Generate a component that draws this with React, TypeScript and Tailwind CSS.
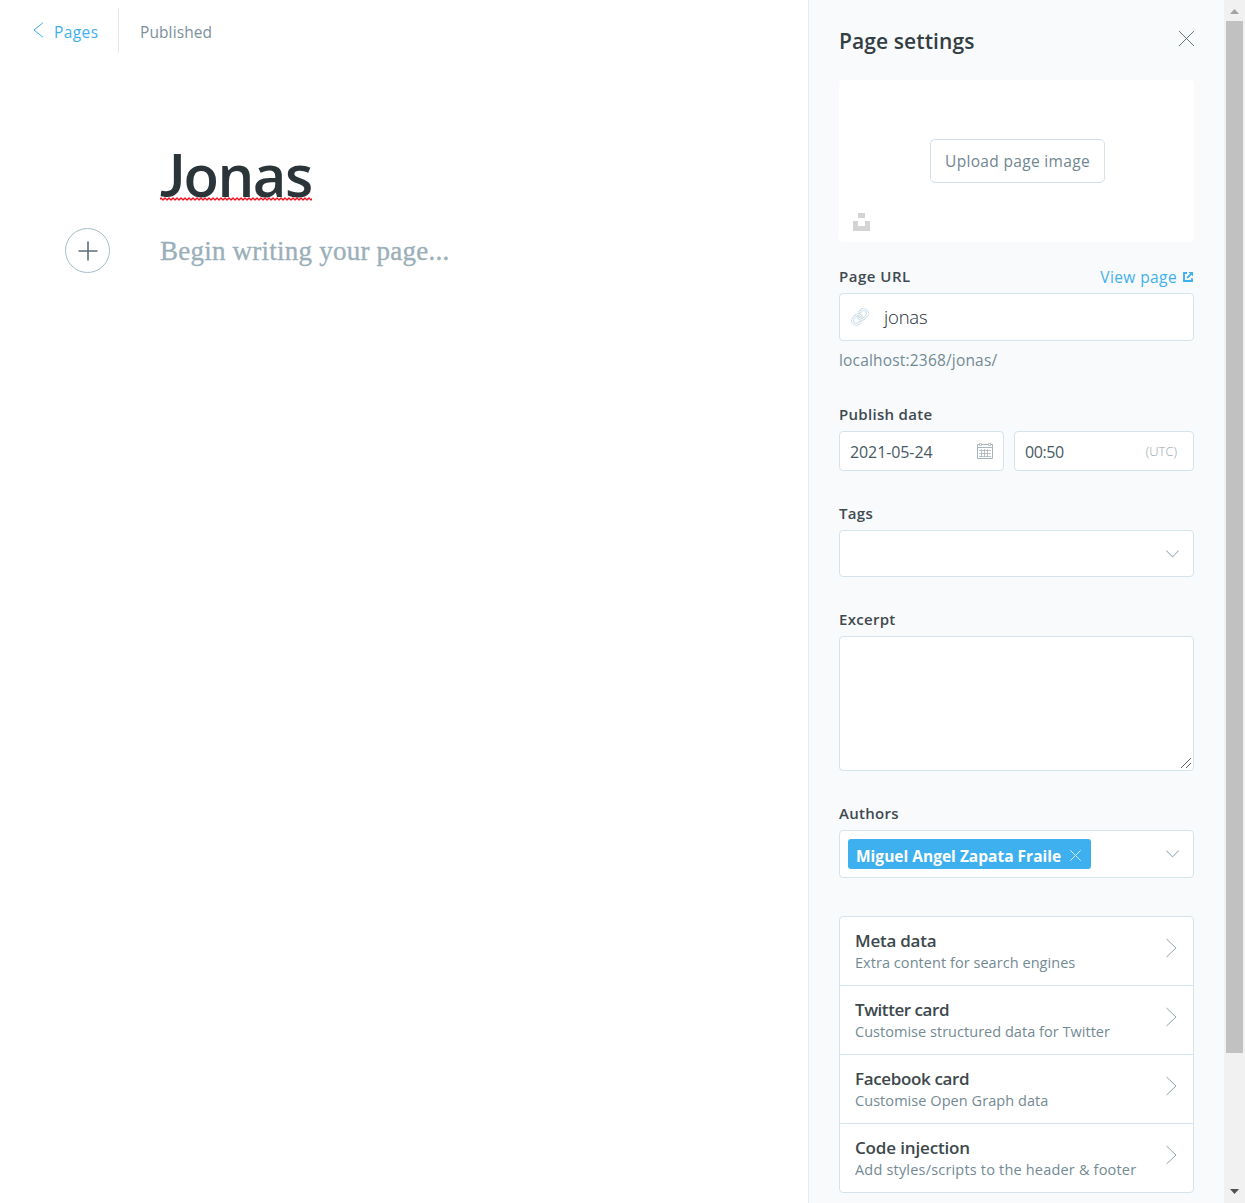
import React from "react";

const sans = "font-['Open_Sans','Noto_Sans',sans-serif]";

function Label({ children, className = "" }: { children: React.ReactNode; className?: string }) {
  return (
    <div className={`h-6 text-[15px] leading-[22px] font-semibold tracking-[0.3px] whitespace-nowrap text-[#3f4a50] ${className}`}>
      {children}
    </div>
  );
}

function ChevronDown() {
  return (
    <svg width="13" height="8" viewBox="0 0 13 8" fill="none" stroke="#a3b5bf" strokeWidth="1.1">
      <path d="M0.4 0.7 L6.5 6.8 L12.6 0.7" />
    </svg>
  );
}

const linkPaths = [
  "M10 13a5 5 0 0 0 7.54.54l3-3a5 5 0 0 0-7.07-7.07l-1.72 1.71",
  "M14 11a5 5 0 0 0-7.54-.54l-3 3a5 5 0 0 0 7.07 7.07l1.71-1.71",
];

const box = "rounded-[4px] border border-[#d5e3ec] bg-white";

const cards = [
  { title: "Meta data", text: "Extra content for search engines", t: "tracking-[-0.25px]", s: "tracking-[0.05px]" },
  { title: "Twitter card", text: "Customise structured data for Twitter", t: "tracking-[-0.45px]", s: "tracking-[0.03px]" },
  { title: "Facebook card", text: "Customise Open Graph data", t: "tracking-[-0.35px]", s: "tracking-[0.06px]" },
  { title: "Code injection", text: "Add styles/scripts to the header & footer", t: "tracking-[-0.15px]", s: "tracking-[0.19px]" },
];

function Editor() {
  return (
    <main className="flex-1 bg-white">
      <header className="flex h-[62px] items-start pt-2 pl-[33px]">
        <a className="flex h-[46px] items-center text-[15.5px] tracking-[0.4px] text-[#3eb0ef]">
          <svg className="-mt-[2px] mr-[10px]" width="11" height="16" viewBox="0 0 11 16" fill="none" stroke="#3eb0ef" strokeWidth="1">
            <path d="M10 0.7 L1 8 L10 15.3" />
          </svg>
          <span className="w-[64px] pt-[3px]">Pages</span>
        </a>
        <div className="h-[45px] w-px bg-[#dfe9ef]" />
        <span className="ml-[21px] text-[15.5px] leading-[48px] tracking-[0.1px] text-[#7c919b]">Published</span>
      </header>
      <h1 className="mt-[76px] ml-[160px] flex h-[76px] flex-col text-[60px] leading-[72px] font-semibold whitespace-nowrap text-[#2b3539]">
        <span className="h-[61px] tracking-[-1.5px]">
          <span className="font-['Lato',sans-serif] tracking-[-2px]">J</span>
          <span className="text-[58px]">onas</span>
        </span>
        <svg className="relative -mt-[2px]" width="152" height="4" fill="none">
          <defs>
            <pattern id="squiggle" width="4" height="4" patternUnits="userSpaceOnUse">
              <path d="M-1 3.5 L1 1 L3 3 L5 0.5" stroke="#f00f1b" strokeWidth="1.2" fill="none" />
            </pattern>
          </defs>
          <rect width="152" height="4" fill="url(#squiggle)" />
        </svg>
      </h1>
      <div className="mt-[14px] ml-[65px] flex h-[45px] items-center">
        <button className="flex size-[45px] items-center justify-center rounded-full border border-[#a9bdc6] pt-px pl-px">
          <svg width="20" height="20" viewBox="0 0 20 20" stroke="#5c7078" strokeWidth="1.6">
            <path d="M10 0.5 V19.5 M0.5 10 H19.5" />
          </svg>
        </button>
        <p className="mt-[2px] ml-[50px] font-['Liberation_Serif',serif] text-[27px] leading-[45px] tracking-[0.23px] whitespace-nowrap text-[#9bafb9] [-webkit-text-stroke:0.35px]">
          Begin writing your page...
        </p>
      </div>
    </main>
  );
}

function Settings() {
  return (
    <aside className="w-[416px] shrink-0 border-l border-[#e3ecf2] bg-[#f9fafc] pr-[30px] pl-[30px]">
      <div className="flex h-20 items-start justify-between">
        <h2 className="mt-[25px] text-[21px] leading-8 font-semibold tracking-[0.1px] text-[#343f44]">Page settings</h2>
        <svg className="mt-[31px] -mr-px" width="16" height="16" viewBox="0 0 16 16" stroke="#54666d" strokeWidth="0.9">
          <path d="M0 0 L15 15 M15 0 L0 15" />
        </svg>
      </div>

      <div className="relative flex h-[162px] justify-center rounded-[4px] bg-white">
        <button className="mt-[59px] ml-[2px] h-11 w-[175px] rounded-[5px] border border-[#d5e0e8] pt-[2px] text-[15.5px] tracking-[0.33px] whitespace-nowrap text-[#6f8791]">
          Upload page image
        </button>
        <svg className="absolute bottom-[11px] left-[14px]" width="17" height="18" viewBox="0 0 17 18" fill="#d4d4d4">
          <path d="M5 0 H12 V5 H5 Z M0 8 H5 V13 H12 V8 H17 V18 H0 Z" />
        </svg>
      </div>

      <div className="mt-[23px] flex h-[26px] justify-between">
        <Label>
          <span className="tracking-[0.5px]">Page URL</span>
        </Label>
        <a className="flex h-[25px] items-center text-[15.5px] leading-[25px] tracking-[0.4px] whitespace-nowrap text-[#3eb0ef]">
          View page
          <svg className="-mt-px mr-px ml-[6px]" width="10" height="10" viewBox="0 0 10 10" fill="none" stroke="#3eb0ef" strokeWidth="1.9">
            <path d="M4 1 H1 V9 H9 V6.2 M4.2 5.8 L8.4 1.6" />
            <path d="M5.4 0 H10 V4.6 Z" fill="#3eb0ef" stroke="none" />
          </svg>
        </a>
      </div>
      <div className={`mt-[2px] flex h-12 items-center pl-[11px] ${box}`}>
        <svg className="-mt-px" width="18" height="18" viewBox="0 0 24 24" fill="none" strokeLinecap="round">
          {linkPaths.map((d) => (
            <g key={d}>
              <path d={d} stroke="#c8dae5" strokeWidth="3.8" />
              <path d={d} stroke="#ffffff" strokeWidth="1.5" />
            </g>
          ))}
        </svg>
        <span className="ml-[15px] text-[18.5px] leading-[46px] font-light tracking-[-0.2px] text-[#1c2b33]">jonas</span>
      </div>
      <p className="mt-2 h-6 text-[15.5px] leading-[23px] tracking-[0.18px] whitespace-nowrap text-[#738a94]">localhost:2368/jonas/</p>

      <Label className="mt-[30px]">Publish date</Label>
      <div className="mt-1 flex gap-[10px] text-[16px] text-[#475a63]">
        <div className={`flex h-10 w-[165px] items-center justify-between pr-[10px] pl-[10px] ${box}`}>
          <span className="mt-[2px] tracking-[-0.1px]">2021-05-24</span>
          <svg className="-mt-px" width="16" height="16" viewBox="0 0 16 16" fill="none" stroke="#a8b5bc" strokeWidth="1">
            <path d="M0.5 1.5 H15.5 V15.5 H0.5 Z M0.5 4.5 H15.5" />
            <path d="M2 7.5 H14 M2 10.5 H14 M2 13.5 H14 M4.5 6 V14 M7.5 6 V14 M10.5 6 V14" strokeWidth="0.8" />
            <path d="M2.5 0.5 H4.5 V2.5 H2.5 Z M11.5 0.5 H13.5 V2.5 H11.5 Z" fill="#fff" strokeWidth="0.8" />
          </svg>
        </div>
        <div className={`flex h-10 flex-1 items-center justify-between pr-[16px] pl-[10px] ${box}`}>
          <span className="mt-[2px] tracking-[-0.4px]">00:50</span>
          <span className="mt-[2px] text-[13px] font-light text-[#95a5ad]">(UTC)</span>
        </div>
      </div>

      <Label className="mt-[31px]">Tags</Label>
      <div className={`mt-1 flex h-[47px] items-center justify-end pr-[14px] ${box}`}>
        <ChevronDown />
      </div>

      <Label className="mt-[31px]">Excerpt</Label>
      <div className={`mt-1 flex h-[135px] items-end justify-end pr-[1px] pb-[1px] ${box}`}>
        <svg width="12" height="12" viewBox="0 0 12 12" stroke="#4d4d4d" strokeWidth="0.9">
          <path d="M1 11 L11 1 M6 11 L11 6" />
        </svg>
      </div>

      <Label className="mt-[31px]">Authors</Label>
      <div className={`mt-1 flex h-12 items-center justify-between pr-[14px] pl-2 ${box}`}>
        <div className="flex h-[30px] w-[243px] items-center justify-between rounded-[3px] bg-[#3eb0ef] pr-[10px] pl-2 text-white">
          <span className="mt-[4px] text-[15.5px] leading-[22px] font-bold tracking-[0.01px] whitespace-nowrap">Miguel Angel Zapata Fraile</span>
          <svg className="mt-[2px]" width="11" height="11" viewBox="0 0 11 11" stroke="#d4edfb" strokeWidth="1">
            <path d="M0.3 0.3 L10.7 10.7 M10.7 0.3 L0.3 10.7" />
          </svg>
        </div>
        <ChevronDown />
      </div>

      <ul className={`mt-[38px] flex flex-col divide-y divide-[#d5e3ec] ${box}`}>
        {cards.map((c) => (
          <li key={c.title} className="flex h-[69px] items-start justify-between pr-4 pl-[15px] last:h-[68px]">
            <div className="pt-3 whitespace-nowrap">
              <div className={`text-[17px] leading-[23px] font-semibold text-[#3d484d] ${c.t}`}>{c.title}</div>
              <div className={`text-[14.5px] leading-[21px] text-[#738a94] ${c.s}`}>{c.text}</div>
            </div>
            <svg className="mt-[21px]" width="11" height="20" viewBox="0 0 11 20" fill="none" stroke="#8fa3ac" strokeWidth="1">
              <path d="M0.5 1 L10 10 L0.5 19" />
            </svg>
          </li>
        ))}
      </ul>
    </aside>
  );
}

function Scrollbar() {
  return (
    <div className="flex w-[21px] shrink-0 flex-col items-center bg-[#f1f1f1]">
      <div className="flex h-[21px] items-center justify-center pt-[2px]">
        <svg width="9" height="5" viewBox="0 0 9 5" fill="#a3a3a3">
          <path d="M0 5 L4.5 0 L9 5 Z" />
        </svg>
      </div>
      <div className="h-[1032px] w-[17px] bg-[#c1c1c1]" />
      <div className="flex flex-1 items-end pb-[9px]">
        <svg width="9" height="5" viewBox="0 0 9 5" fill="#505050">
          <path d="M0 0 L4.5 5 L9 0 Z" />
        </svg>
      </div>
    </div>
  );
}

export default function App() {
  return (
    <div className={`flex h-[1203px] w-[1245px] overflow-hidden bg-white ${sans}`}>
      <Editor />
      <Settings />
      <Scrollbar />
    </div>
  );
}
